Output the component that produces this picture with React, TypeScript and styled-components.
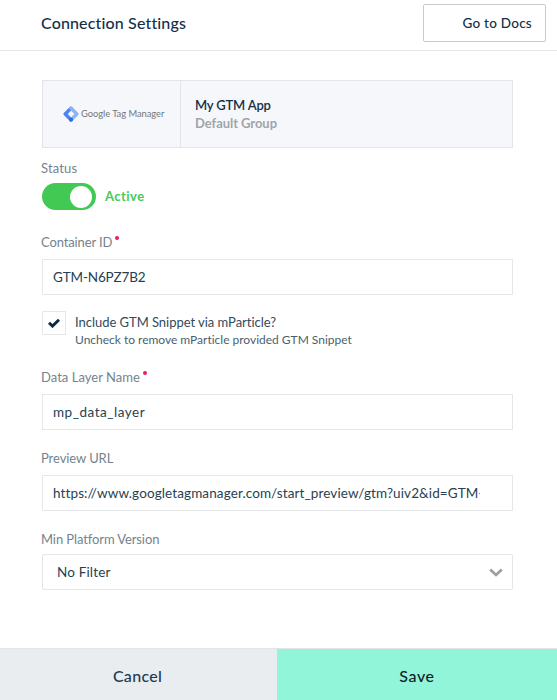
import React from 'react';
import styled, { createGlobalStyle } from 'styled-components';

const GlobalStyle = createGlobalStyle`
  *, *::before, *::after { box-sizing: border-box; }
  body { margin: 0; background: #fff; }
  body, button, input { font-family: Lato, "Liberation Sans", sans-serif; color: #263f52; }
`;

const Page = styled.div`
  display: flex;
  flex-direction: column;
  height: 700px;
  overflow: hidden;
  background: #fff;
`;

const Header = styled.header`
  display: flex;
  align-items: center;
  justify-content: space-between;
  height: 51px;
  padding: 0 11px 4px 41px;
  border-bottom: 1px solid #e3e5e6;
`;

const Title = styled.h1`
  margin: 0;
  font-size: 16px;
  font-weight: 500;
  line-height: 20px;
  letter-spacing: 0.15px;
  color: #12304a;
`;

const DocsButton = styled.button`
  width: 123px;
  height: 38px;
  padding: 0 13px 0 0;
  border: 1px solid #c6cbcf;
  border-radius: 2px;
  background: #fff;
  font-size: 13.5px;
  font-weight: 500;
  letter-spacing: 0.25px;
  text-align: right;
  color: #12304a;
`;

const Content = styled.main`
  flex: 1;
  display: flex;
  flex-direction: column;
  padding: 29px 44px 0 42px;
`;

const AppCard = styled.section`
  display: flex;
  height: 68px;
  margin-bottom: 12px;
  border: 1px solid #e3e5e6;
  background: #f6f7fa;
`;

const LogoCell = styled.div`
  display: flex;
  align-items: center;
  gap: 2px;
  width: 138px;
  padding-left: 20px;
  border-right: 1px solid #e3e5e6;
`;

const LogoText = styled.span`
  font-size: 9.4px;
  letter-spacing: -0.05px;
  line-height: 12px;
  white-space: nowrap;
  color: #74787c;
`;

const AppInfo = styled.div`
  display: flex;
  flex-direction: column;
  justify-content: center;
  padding: 0 0 1px 14px;
`;

const AppName = styled.span`
  font-size: 13px;
  font-weight: 600;
  line-height: 18px;
  letter-spacing: -0.17px;
  color: #12304a;
`;

const AppGroup = styled(AppName)`
  font-weight: 700;
  letter-spacing: -0.05px;
  color: #9fa5a9;
`;

const Field = styled.div<{ $after: number; $gap?: number }>`
  display: flex;
  flex-direction: column;
  gap: ${(p) => p.$gap ?? 9}px;
  margin-bottom: ${(p) => p.$after}px;
`;

const Label = styled.label<{ $spacing?: number }>`
  display: flex;
  margin-left: -1px;
  font-size: 13px;
  line-height: 16px;
  letter-spacing: ${(p) => p.$spacing ?? 0}px;
  color: #75838c;
`;

const Required = styled.span`
  width: 4px;
  height: 4px;
  margin: 2px 0 0 3px;
  border-radius: 50%;
  background: #ea1f56;
`;

const ToggleRow = styled.div`
  display: flex;
  align-items: center;
  gap: 9px;
`;

const Toggle = styled.button`
  display: flex;
  align-items: center;
  justify-content: flex-end;
  width: 54px;
  height: 27px;
  padding: 0 4px;
  border: 0;
  border-radius: 14px;
  background: #41c953;
`;

const Knob = styled.span`
  width: 22px;
  height: 22px;
  border-radius: 50%;
  background: #fff;
`;

const ToggleText = styled.span`
  padding-bottom: 1px;
  font-size: 13px;
  font-weight: 700;
  letter-spacing: 0.45px;
  color: #45cb57;
`;

const TextInput = styled.input<{ $spacing: number }>`
  width: 100%;
  height: 36px;
  padding: 0 32px 1px 10px;
  border: 1px solid #e5e7e8;
  border-radius: 0;
  background: #fff;
  outline: 0;
  font-size: 13.5px;
  letter-spacing: ${(p) => p.$spacing}px;
`;

const CheckRow = styled.div`
  display: flex;
  gap: 9px;
  height: 36px;
  margin-bottom: 22px;
`;

const CheckBox = styled.span`
  display: flex;
  align-items: center;
  justify-content: center;
  width: 24px;
  height: 24px;
  border: 1px solid #e5e7e8;
`;

const CheckTexts = styled.div`
  display: flex;
  flex-direction: column;
  padding-top: 2px;
`;

const CheckTitle = styled.span`
  font-size: 13px;
  line-height: 18px;
  letter-spacing: -0.03px;
  color: #334a5b;
`;

const CheckHint = styled.span`
  font-size: 12px;
  line-height: 17px;
  letter-spacing: -0.01px;
  color: #4a5f6e;
`;

const Select = styled.button`
  display: flex;
  align-items: center;
  justify-content: space-between;
  width: 100%;
  height: 36px;
  padding: 0 9px 0 14px;
  border: 1px solid #e3e5e6;
  border-radius: 2px;
  background: #fff;
`;

const SelectValue = styled.span`
  padding-bottom: 1px;
  font-size: 13.5px;
  letter-spacing: 0.16px;
`;

const Footer = styled.footer`
  display: grid;
  grid-template-columns: 277px 1fr;
  height: 52px;
  border-top: 1px solid #e3e5e6;
`;

const FooterButton = styled.button<{ $primary?: boolean }>`
  padding: 2px ${(p) => (p.$primary ? 0 : 2)}px 0 0;
  border: 0;
  background: ${(p) => (p.$primary ? '#91f6d9' : '#e9edf0')};
  font-size: 16px;
  font-weight: 500;
  letter-spacing: ${(p) => (p.$primary ? 0.6 : 0.3)}px;
  color: ${(p) => (p.$primary ? '#13202a' : '#1d3a52')};
`;

const TagManagerIcon = () => (
  <svg width="16" height="16" viewBox="0 0 16 16">
    <path d="M8 2.2 2.2 8 8 13.8" fill="none" stroke="#4a83f5" strokeWidth="3.4" strokeLinejoin="round" strokeLinecap="round" />
    <path d="M8 2.2 13.8 8 8.6 13.2" fill="none" stroke="#8cb3fa" strokeWidth="3.4" strokeLinejoin="round" strokeLinecap="round" />
    <circle cx="8" cy="13.7" r="2.1" fill="#2c6fe0" />
  </svg>
);

const CheckIcon = () => (
  <svg width="12" height="10" viewBox="0 0 12 10">
    <path d="m1 4.7 3.5 3.4L11 1.7" fill="none" stroke="#0b2a40" strokeWidth="2.9" />
  </svg>
);

const ChevronIcon = () => (
  <svg width="14" height="9" viewBox="0 0 14 9">
    <path d="m1.2 1.4 5.8 5.5 5.8-5.5" fill="none" stroke="#96a0a5" strokeWidth="2.8" />
  </svg>
);

export default function App() {
  return (
    <Page>
      <GlobalStyle />
      <Header>
        <Title>Connection Settings</Title>
        <DocsButton>Go to Docs</DocsButton>
      </Header>
      <Content>
        <AppCard>
          <LogoCell>
            <TagManagerIcon />
            <LogoText>Google Tag Manager</LogoText>
          </LogoCell>
          <AppInfo>
            <AppName>My GTM App</AppName>
            <AppGroup>Default Group</AppGroup>
          </AppInfo>
        </AppCard>
        <Field $after={24} $gap={7}>
          <Label $spacing={0.15}>Status</Label>
          <ToggleRow>
            <Toggle aria-label="Status">
              <Knob />
            </Toggle>
            <ToggleText>Active</ToggleText>
          </ToggleRow>
        </Field>
        <Field $after={16}>
          <Label $spacing={-0.12}>
            Container ID
            <Required />
          </Label>
          <TextInput $spacing={-0.15} defaultValue="GTM-N6PZ7B2" />
        </Field>
        <CheckRow>
          <CheckBox>
            <CheckIcon />
          </CheckBox>
          <CheckTexts>
            <CheckTitle>Include GTM Snippet via mParticle?</CheckTitle>
            <CheckHint>Uncheck to remove mParticle provided GTM Snippet</CheckHint>
          </CheckTexts>
        </CheckRow>
        <Field $after={20}>
          <Label $spacing={0.03}>
            Data Layer Name
            <Required />
          </Label>
          <TextInput $spacing={0.52} defaultValue="mp_data_layer" />
        </Field>
        <Field $after={20}>
          <Label $spacing={-0.08}>Preview URL</Label>
          <TextInput
            $spacing={0.11}
            defaultValue="https://www.googletagmanager.com/start_preview/gtm?uiv2&id=GTM-N6PZ7B2"
          />
        </Field>
        <Field $after={0} $gap={7}>
          <Label $spacing={-0.1}>Min Platform Version</Label>
          <Select>
            <SelectValue>No Filter</SelectValue>
            <ChevronIcon />
          </Select>
        </Field>
      </Content>
      <Footer>
        <FooterButton>Cancel</FooterButton>
        <FooterButton $primary>Save</FooterButton>
      </Footer>
    </Page>
  );
}
